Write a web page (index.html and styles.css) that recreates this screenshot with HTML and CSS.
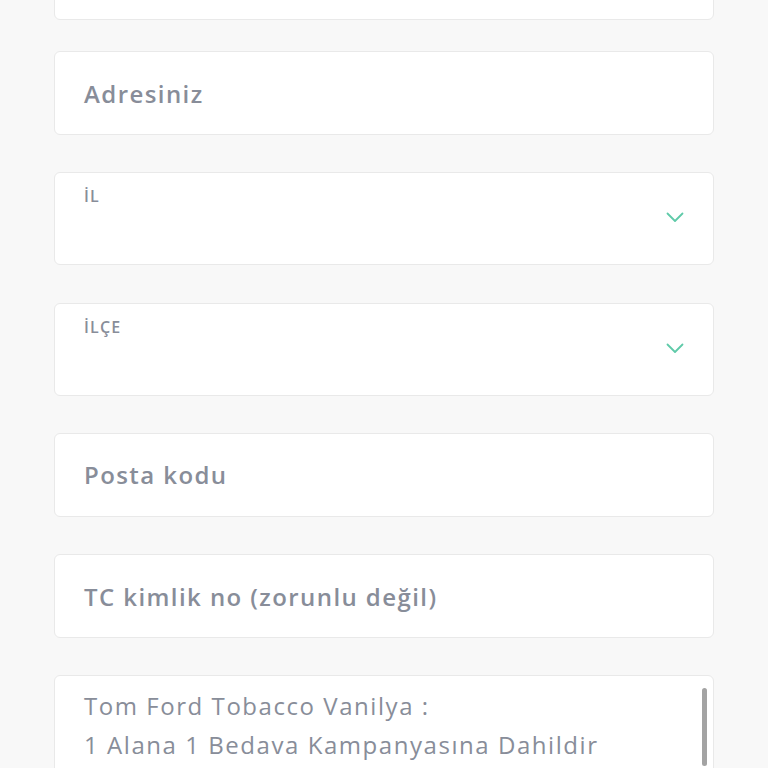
FILE: index.html
```html
<!DOCTYPE html>
<html lang="tr">
<head>
<meta charset="utf-8">
<link rel="stylesheet" href="styles.css">
</head>
<body>
<div class="form">
  <div class="field field-top"></div>
  <div class="field field-text first"><span class="ph">Adresiniz</span></div>
  <div class="field field-select">
    <span class="label">İL</span>
    <svg class="chev" width="18" height="11" viewBox="0 0 18 11"><path d="M1.5 1.5 L9 9 L16.5 1.5" fill="none" stroke="#5fcaa9" stroke-width="1.8" stroke-linecap="round" stroke-linejoin="round"/></svg>
  </div>
  <div class="field field-select">
    <span class="label">İLÇE</span>
    <svg class="chev" width="18" height="11" viewBox="0 0 18 11"><path d="M1.5 1.5 L9 9 L16.5 1.5" fill="none" stroke="#5fcaa9" stroke-width="1.8" stroke-linecap="round" stroke-linejoin="round"/></svg>
  </div>
  <div class="field field-text"><span class="ph">Posta kodu</span></div>
  <div class="field field-text"><span class="ph">TC kimlik no (zorunlu değil)</span></div>
  <div class="field field-area">
    <div class="area-text">
      <p>Tom Ford Tobacco Vanilya :</p>
      <p>1 Alana 1 Bedava Kampanyasına Dahildir</p>
    </div>
    <div class="scrollbar"></div>
  </div>
</div>
</body>
</html>
```
FILE: styles.css
```css
html, body {
  margin: 0;
  padding: 0;
  background: #f8f8f8;
  height: 768px;
  overflow: hidden;
}
body {
  font-family: "Open Sans", "DejaVu Sans", sans-serif;
  color: #868b96;
}
.form {
  width: 660px;
  margin-left: 54px;
  margin-top: -64px;
  display: flex;
  flex-direction: column;
  gap: 37.3px;
}
.field {
  box-sizing: border-box;
  background: #ffffff;
  border: 1px solid #e9e9e9;
  border-radius: 6px;
}
.field-top {
  height: 84px;
}
.field-text {
  height: 84px;
  display: flex;
  align-items: center;
  padding-left: 29px;
}
.field-text.first {
  margin-top: -6.3px;
}
.ph {
  font-size: 24px;
  font-weight: 600;
  letter-spacing: 1.42px;
  color: #888d99;
}
.field-select {
  height: 93px;
  display: flex;
  align-items: flex-start;
  justify-content: space-between;
  padding: 12px 30px 0 29px;
}
.label {
  font-size: 16px;
  font-weight: 600;
  letter-spacing: 1.2px;
  color: #888d99;
}
.chev {
  margin-top: 27px;
  margin-right: -1px;
}
.field-area {
  height: 130px;
  display: flex;
  justify-content: space-between;
  padding: 10px 6px 0 29px;
}
.area-text p {
  margin: 0;
  font-size: 24px;
  line-height: 39px;
  letter-spacing: 1.55px;
  color: #888d99;
}
.scrollbar {
  width: 5px;
  height: 78px;
  margin-top: 2px;
  border-radius: 3px;
  background: #a3a3a3;
}
```
